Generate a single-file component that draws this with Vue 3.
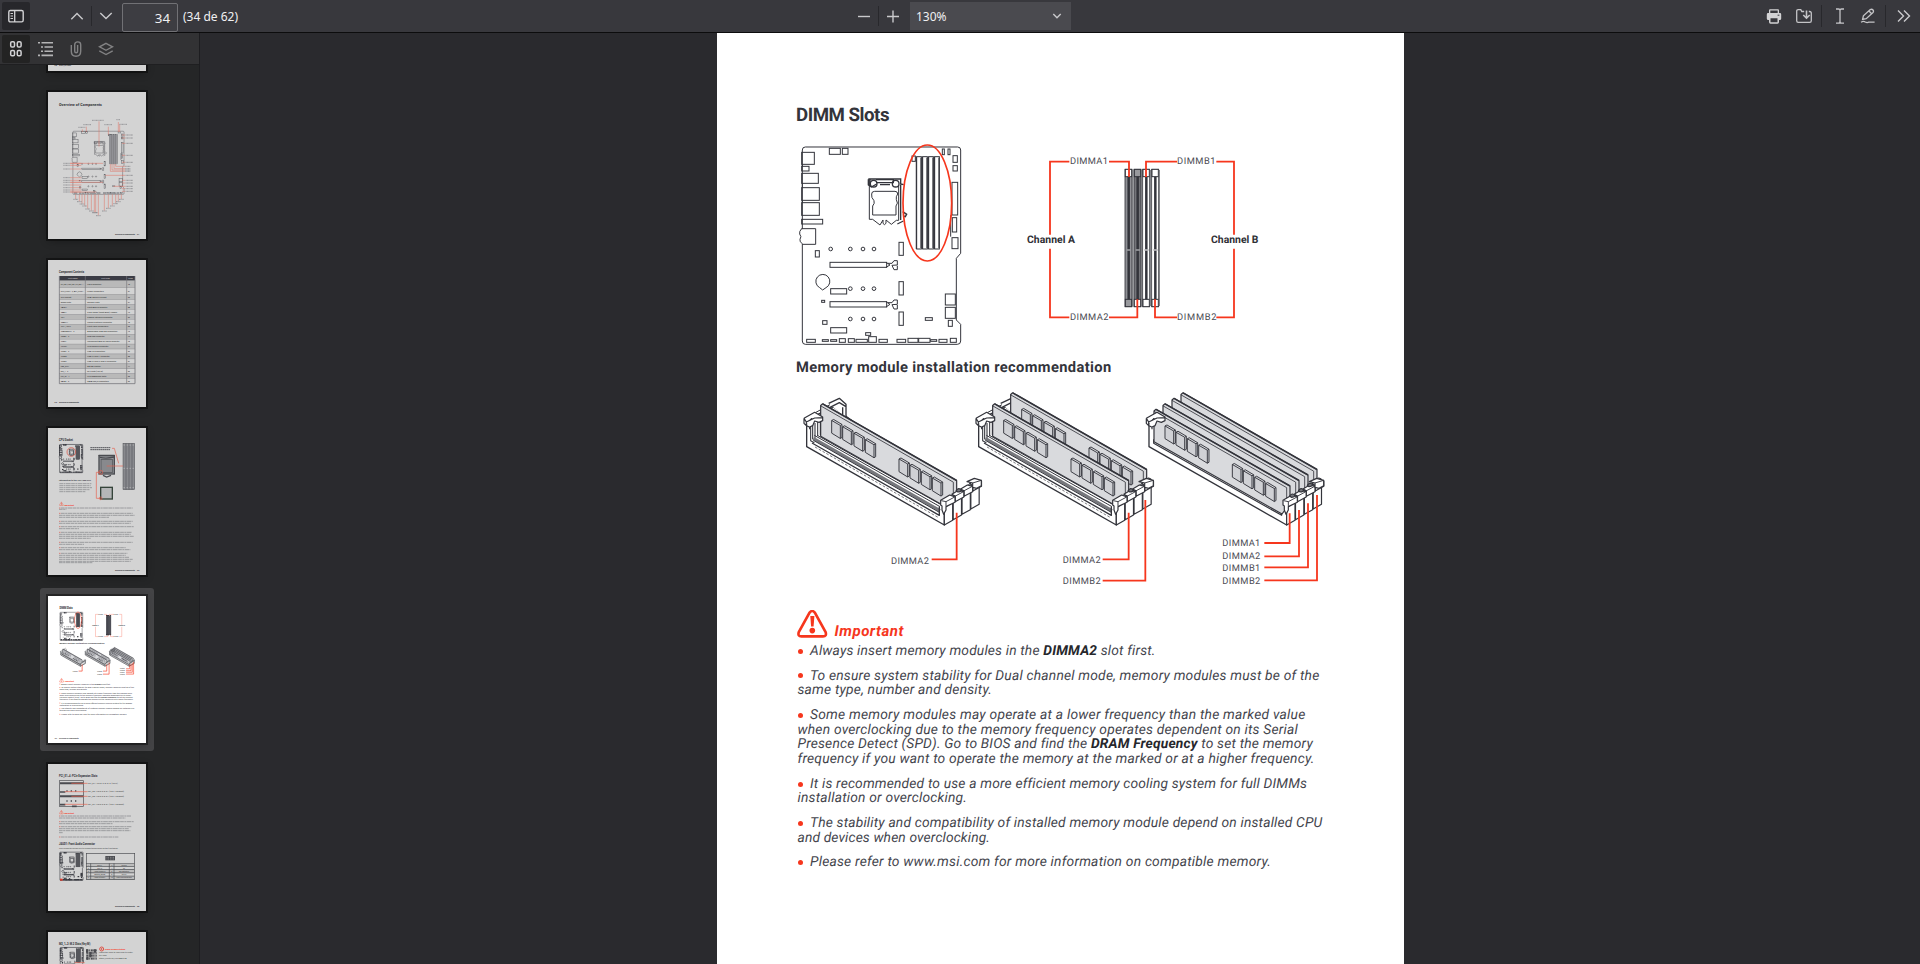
<script setup>
const notes = [
  [{ w: 345, parts: [['Always insert memory modules in the '], ['DIMMA2', 1], [' slot first.']] }],
  [
    { w: 509.5, parts: [['To ensure system stability for Dual channel mode, memory modules must be of the']] },
    { w: 194.5, parts: [['same type, number and density.']] },
  ],
  [
    { w: 495.5, parts: [['Some memory modules may operate at a lower frequency than the marked value']] },
    { w: 500.5, parts: [['when overclocking due to the memory frequency operates dependent on its Serial']] },
    { w: 515, parts: [['Presence Detect (SPD). Go to BIOS and find the '], ['DRAM Frequency', 1], [' to set the memory']] },
    { w: 517, parts: [['frequency if you want to operate the memory at the marked or at a higher frequency.']] },
  ],
  [
    { w: 496, parts: [['It is recommended to use a more efficient memory cooling system for full DIMMs']] },
    { w: 169.5, parts: [['installation or overclocking.']] },
  ],
  [
    { w: 512.5, parts: [['The stability and compatibility of installed memory module depend on installed CPU']] },
    { w: 192.5, parts: [['and devices when overclocking.']] },
  ],
  [{ w: 461, parts: [['Please refer to www.msi.com for more information on compatible memory.']] }],
]

let lineY = 655
const miniLines = []
notes.forEach((para) => {
  para.forEach((line, i) => {
    miniLines.push({ first: i === 0, x: i === 0 ? 810 : 797.5, y: lineY, w: line.w, parts: line.parts })
    lineY += 14.75
  })
  lineY += 9.95
})

const vFit = {
  mounted(el, { value }) {
    const natural = el.getBoundingClientRect().width
    el.style.letterSpacing = `${(value - natural) / el.textContent.length}px`
  },
}

const modules = [
  { dx: 0, slots: [1] },
  { dx: 516, slots: [3, 1] },
  { dx: 1027, slots: [3, 2, 1, 0] },
]
const chips = [61, 94, 128, 162, 263, 296, 330, 363]
const latches = [3, 2, 1, 0]

const leaders = [
  { d: 'M530 488V628H455', x: 333, y: 641, t: 'DIMMA2' },
  { d: 'M1046 488V628H968', x: 848, y: 639, t: 'DIMMA2' },
  { d: 'M1096 450V692H968', x: 848, y: 703, t: 'DIMMB2' },
  { d: 'M1529 490V579H1453', x: 1327, y: 589, t: 'DIMMA1' },
  { d: 'M1557 480V619H1453', x: 1327, y: 628, t: 'DIMMA2' },
  { d: 'M1584 460V652H1453', x: 1327, y: 664, t: 'DIMMB1' },
  { d: 'M1611 435V691H1453', x: 1327, y: 702, t: 'DIMMB2' },
]

// outline rectangles of the motherboard: x, y, width, height
const parts = [
  [148, 175, 33, 18], [187, 175, 17, 18], [65, 187, 38, 36], [65, 229, 22, 14], [65, 250, 50, 30],
  [65, 293, 53, 38], [65, 338, 53, 38], [65, 388, 63, 14], [106, 482, 12, 19], [357, 457, 13, 39],
  [357, 575, 13, 40], [357, 666, 13, 40], [150, 517, 170, 15], [150, 635, 170, 16], [152, 596, 48, 16],
  [152, 713, 48, 16], [496, 612, 30, 33], [496, 652, 30, 33], [505, 691, 12, 18], [436, 683, 21, 8],
  [125, 631, 9, 6], [128, 692, 13, 11], [487, 177, 6, 17], [504, 177, 6, 17], [519, 197, 13, 20],
  [519, 227, 13, 16], [516, 277, 17, 98], [517, 383, 13, 43], [516, 443, 18, 33],
  [80, 748, 26, 9], [127, 749, 18, 5], [152, 749, 18, 5], [178, 746, 18, 11], [205, 746, 18, 11],
  [228, 748, 34, 9], [266, 740, 23, 17], [257, 728, 15, 8], [297, 748, 25, 9], [351, 748, 26, 9],
  [384, 745, 30, 12], [416, 745, 34, 12], [452, 749, 18, 5], [477, 748, 24, 9], [511, 745, 18, 12],
  [396, 198, 10, 16],
]
const dimms = [410, 428, 446, 464]
const holes = [[152, 477], [211, 477], [249, 477], [282, 477], [211, 596], [249, 596], [282, 596], [211, 687], [249, 687], [282, 687]]

const channelSlots = [
  { x: 375, rail: '#8f9095', cap: '#fff', foot: '#98999d', mark: '#98999d' },
  { x: 402, rail: '#737479', cap: '#98999d', foot: '#fff', mark: '#98999d' },
  { x: 428, rail: '#fff', cap: '#fff', foot: '#fff', mark: '#b8b8bb' },
  { x: 455, rail: '#fff', cap: '#fff', foot: '#fff', mark: '#b8b8bb' },
]

const tableRows = [
  ['CPU_FAN1, PUMP_FAN1, SYS_FAN1~4', 'Fan Connectors', '40'], ['CPU_PWR1~2, ATX_PWR1', 'Power Connectors', '37'],
  ['CPU Socket', 'LGA1200 CPU Socket', '33'], ['DIMM Slots', 'Memory slots', '34'], ['JAUD1', 'Front Audio Connector', '38'],
  ['JBAT1', 'Clear CMOS (Reset BIOS) Jumper', '42'], ['JCI1', 'Chassis Intrusion Connector', '39'],
  ['JDASH1', 'Tuning Controller connector', '40'], ['JFP1, JFP2', 'Front Panel Connectors', '35'],
  ['JRAINBOW1~2', 'Addressable RGB LED connectors', '43'], ['JRGB1~2', 'RGB LED connector', '42'],
  ['JTBT1', 'Thunderbolt Add-on Card Connector', '40'], ['JTPM1', 'TPM Module Connector', '39'],
  ['JUSB1~2', 'USB 2.0 Connectors', '39'], ['JUSB3', 'USB 3.2 Gen 1 Connector', '38'],
  ['JUSB4', 'USB 3.2 Gen 2 Type-C Connector', '37'], ['LED_SW1', 'EZ LED Control', '44'],
  ['M2_1~2', 'M.2 slots (Key M)', '36'], ['PCI_E1~4', 'PCIe Expansion Slots', '35'], ['SATA1~6', 'SATA 6Gb/s Connectors', '36'],
].map((cells, i) => ({
  cells,
  y: i < 2 ? 62 + i * 21 : 104 + (i - 2) * 14.83,
  h: i < 2 ? 21 : 14.83,
  fill: i % 2 ? '#d3d3d3' : '#b9b9b9',
}))

const bottomPins = [[83, 321], [94, 328], [102, 335], [110, 341], [119, 350], [130, 356], [139, 361], [143, 361], [151, 370], [169, 356], [181, 348], [193, 341], [203, 334], [211, 328], [220, 321]]
const leftPins = [214, 220, 231, 257, 265, 271, 279, 287, 294, 300]
const rightPins = [129, 138, 154, 190, 211, 250, 265, 273, 283, 290, 298]

const cpuText = [
  [240, 221, 1], [244, 22], [256, 221, 1], [262, 227], [268, 150], [280, 221, 1], [286, 215], [296, 224, 1], [302, 60],
  [313, 219, 1], [319, 215], [325, 225], [331, 95], [343, 221, 1], [349, 75], [359, 200, 1], [365, 214],
  [376, 205, 1], [382, 200], [388, 210], [394, 221], [400, 215], [404, 100],
]
const pcieText = [[156, 216, 1], [162, 205], [173, 224, 1], [179, 168], [188, 217, 1], [194, 215], [200, 220], [206, 18], [219, 178, 1]]
const pcieRows = [[58, 70], [83, 50], [97, 70], [121, 50]]
const jaudRows = [['1', 'MIC L', '2', 'Ground'], ['3', 'MIC R', '4', 'NC'], ['5', 'Head Phone R', '6', 'MIC Detection'], ['7', 'SENSE_SEND', '8', 'No Pin'], ['9', 'Head Phone L', '10', 'Head Phone Detection']]
</script>

<template>
  <div class="viewer">
    <svg class="defs" width="0" height="0" aria-hidden="true">
      <defs>
        <g id="board" fill="none" stroke="#33343b">
          <path d="M76 171H533Q542 171 542 180V490L529 505V690L542 703V753Q542 763 532 763H76Q67 763 67 753V461Q58 456 60 448Q66 440 59 432Q57 424 65 416H67V180Q67 171 76 171Z" fill="none" />
          <rect v-for="(p, i) in parts" :key="i" :x="p[0]" :y="p[1]" :width="p[2]" :height="p[3]" />
          <path d="M65 416H107V463H67M512 376V440M67 223V229M67 280V293M67 331V338" />
          <g v-for="x in dimms" :key="x">
            <rect :x="x" y="200" width="14" height="277" />
            <path :d="`M${x - 1} 200V477M${x + 13} 203V474`" stroke-width="3.4" />
          </g>
          <circle v-for="(h, i) in holes" :key="i" :cx="h[0]" :cy="h[1]" r="5.5" />
          <path d="M119 593A21 21 0 1 1 138 593L128 600Z" />
          <path d="M318 517L330 525L318 532M324 520H336L342 512H352V525L336 526L342 539H352V527M318 635L330 643L318 651M324 638H336L342 630H352V643L336 644L342 657H352V645" />
          <path d="M268 268V388L278 388L300 405L309 390V400Q313 408 318 400V390L334 403L349 391H356V286" />
          <path d="M265 267H362V284M270 265V287M265 268V285L274 291L290 282M300 284H330M362 282L371 284" stroke-width="4" />
          <path d="M288 269H340V278H288M362 285V390" stroke-width="4" />
          <circle cx="281" cy="281" r="10" stroke-width="4" />
          <circle cx="347" cy="281" r="10" stroke-width="4" />
          <path d="M284 304H345Q353 304 353 312Q347 320 349 329Q356 340 348 348V375H278V348Q285 340 282 332Q273 323 275 312Q275 304 284 304Z" />
          <path d="M368 365L380 373L376 380L370 378M352 402L370 393" stroke-width="4" />
        </g>

        <g id="channels">
          <g v-for="s in channelSlots" :key="s.x" stroke="#33343b">
            <rect :x="s.x" y="88" width="21" height="412" :fill="s.rail" stroke-width="2.5" />
            <rect :x="s.x + 1" y="88" width="19" height="22" :fill="s.cap" stroke-width="3" />
            <rect :x="s.x + 1" y="478" width="19" height="22" :fill="s.foot" stroke-width="3" />
            <path :d="`M${s.x + 11} 110V478`" stroke-width="7.5" />
            <path :d="`M${s.x + 23} 90V498`" stroke="#77787d" stroke-width="3.4" />
            <path :d="`M${s.x + 5} 330H${s.x + 18}`" :stroke="s.mark" stroke-width="5" />
          </g>
          <g fill="none" stroke="#f6361d" stroke-width="5.4">
            <path d="M208 65H150V284M150 326V532H208M327 65H387V111M327 532H412V478M531 65H438V111M649 65H702V284M702 326V532H649M531 532H465V478" />
          </g>
        </g>

        <g id="modules" stroke="#33343b" stroke-linejoin="round">
          <g v-for="m in modules" :key="m.dx" :transform="`translate(${m.dx} 0)`">
            <path d="M80 222V290L493 525V468L520 440L160 170L100 200Z" fill="#fff" stroke-width="4" />
            <g v-if="m.slots.length < 4" fill="none">
              <path d="M146 160L178 145L198 163V204M150 172L178 158L198 170M188 172V200" fill="#fff" stroke-width="4" />
              <path d="M106 188L150 164M118 196L160 172" stroke-width="3" />
              <path d="M92 230V272L103 278M98 226V268M105 219V264M113 216V258M121 214V255" stroke-width="3.2" />
              <path d="M100 265L480 482" stroke="#77787d" stroke-width="9" />
              <path d="M103 256L480 470M100 271L478 487M112 256L480 462" stroke-width="3" />
              <path d="M96 279L478 496V470" stroke-width="4" />
              <path d="M105 291L476 503" stroke-width="2" stroke-dasharray="8 5" />
            </g>
            <path v-else d="M94 268V280L478 496V470" fill="none" stroke-width="3.4" />
            <g v-for="s in m.slots" :key="s" :transform="`translate(${27 * s} ${-16.5 * s})`">
              <path d="M95 275V183L101 178L503 408V460L479 492Z" fill="#d9dadd" stroke-width="3.6" />
              <path d="M95 184L493 413V455" fill="none" stroke-width="2.5" />
              <path d="M101 178L503 408" fill="none" stroke-width="4.6" />
              <g v-if="m.slots.length < 4 || s === 0" fill="#d0d1d5" stroke-width="2.8">
                <path v-for="c in chips" :key="c" :transform="`translate(${c + 67} ${c * .572 + 191})`" d="M0 2L6 -1L31 14V53L26 56L0 40ZM0 2L26 17L31 14M26 17V56" />
              </g>
            </g>
            <path d="M72 205L104 187L128 201V212L117 217L104 213L98 227L89 231V238M72 205L79 216L104 204L128 203M72 205V220L79 227L88 231M79 216V226" fill="#fff" stroke-width="3.6" />
            <g v-for="l in latches" :key="l" :transform="`translate(${26.5 * l} ${-16 * l})`" fill="#fff" stroke-width="3.6">
              <path d="M493 474V525L518 511V455Z" />
              <path v-if="l" d="M489 449L509 437L525 441V457L499 471V454Z" />
              <path v-else d="M482 451L509 435L525 441V457L498 470V480L491 493L486 480V468L482 465Z" />
              <path d="M484 452L498 455L524 441M498 455V468" fill="none" stroke-width="2.8" />
              <path v-if="m.slots.includes(l)" d="M502 438Q509 427 518 436Q516 442 507 442Z" fill="#77787d" />
            </g>
            <path d="M561 395L583 385L604 391V407L590 415L578 412V399Z" fill="#fff" stroke-width="3.6" />
            <path d="M578 399L604 391" fill="none" stroke-width="2.8" />
          </g>
          <path v-for="(l, i) in leaders" :key="i" :d="l.d" fill="none" stroke="#f6361d" stroke-width="5.4" stroke-linejoin="miter" />
        </g>

        <g id="warning">
          <path d="M12.6 2.6Q15.2 -.6 17.8 2.6L28.6 22Q30 26.4 26 26.4H4.4Q.4 26.4 1.8 22Z" fill="none" stroke="#f6361d" stroke-width="2.6" />
          <path d="M13.3 6H17.4L16.6 16.4H14.1Z" fill="#f6361d" />
          <circle cx="15.3" cy="20.6" r="2.8" fill="#f6361d" />
        </g>
      </defs>
    </svg>

    <header class="toolbar">
      <div class="group">
        <button class="btn on" aria-label="Sidebar">
          <svg width="16" height="16" fill="none" stroke="#d2d2d4"><rect x=".8" y="2.5" width="14.4" height="11.4" rx="1.6" stroke-width="1.4" /><path d="M6.7 2.5V14" stroke-width="1.3" /><path d="M2.5 5.5H5M2.5 8H5M2.5 10.5H5" /></svg>
        </button>
        <span class="gap-wide"></span>
        <button class="btn" aria-label="Previous"><svg width="16" height="16"><path d="M2.3 11.2L8 5.5L13.7 11.2" class="line" /></svg></button>
        <i class="sep"></i>
        <button class="btn" aria-label="Next"><svg width="16" height="16"><path d="M2.3 4.9L8 10.6L13.7 4.9" class="line" /></svg></button>
        <div class="page-input">34</div>
        <span class="count">(34 de 62)</span>
      </div>
      <div class="group middle">
        <button class="btn" aria-label="Zoom out"><svg width="16" height="16"><path d="M2 8.5H14" class="line" /></svg></button>
        <i class="sep"></i>
        <button class="btn" aria-label="Zoom in"><svg width="16" height="16"><path d="M2 8.5H14M8 2.5V14.5" class="line" /></svg></button>
        <div class="select"><span>130%</span><svg width="16" height="16"><path d="M4.3 6L8 9.7L11.7 6" class="line" /></svg></div>
      </div>
      <div class="group right">
        <button class="btn" aria-label="Print">
          <svg width="16" height="16" fill="#d2d2d4"><path d="M4 1.2H12Q13 1.2 13 2.5V5H14Q15.2 5 15.2 6.4V10.5Q15.2 12 13.8 12H13V14Q13 15.8 11.5 15.8H4.5Q3 15.8 3 14V12H2.2Q.8 12 .8 10.5V6.4Q.8 5 2 5H3V2.5Q3 1.2 4 1.2Z" /><path d="M4.3 2.6H11.7V5H4.3ZM4.5 10.3H11.5V14.3H4.5Z" fill="#38383d" /><path d="M11.6 7.2H13.4" stroke="#38383d" /></svg>
        </button>
        <button class="btn dl" aria-label="Save">
          <svg width="16" height="16" fill="none" stroke="#c4c4c7" stroke-width="1.3"><path d="M8.2 3.5H5.8L4.8 1.7H2.2Q.7 1.7 .7 3.2V12.7Q.7 14.3 2.2 14.3H13.7Q15.3 14.3 15.3 12.7V5Q15.3 3.5 13.7 3.5H12.8" /><path d="M10.5 2.5V10M7.3 7L10.5 10.2L13.7 7" stroke-width="1.6" /></svg>
        </button>
        <i class="sep"></i>
        <button class="btn" aria-label="Text">
          <svg width="16" height="16" fill="none" stroke="#c4c4c7" stroke-width="1.3"><path d="M4 1H6.5Q8 1 8 2.6V13.6Q8 15.2 6.5 15.2H4M12 1H9.5Q8 1 8 2.6M8 13.6Q8 15.2 9.5 15.2H12" /></svg>
        </button>
        <button class="btn" aria-label="Draw">
          <svg width="16" height="16" fill="none" stroke="#c4c4c7" stroke-width="1.3"><path d="M2.6 11.5L3.4 7.8L10.3 1.6Q11.8 .7 13 2Q14 3.3 13 4.5L6.2 10.7ZM9 3L11.6 5.8" /><path d="M1 14.2Q3.5 12.8 5.3 14Q7 15 8.7 14.2H14.6" /></svg>
        </button>
        <i class="sep last"></i>
        <button class="btn" aria-label="Tools"><svg width="16" height="16"><path d="M2 2.5L7.5 8L2 13.5M8 2.5L13.5 8L8 13.5" class="line" /></svg></button>
      </div>
    </header>

    <div class="body">
      <aside class="sidebar">
        <nav class="tabs">
          <button class="btn on" aria-label="Thumbnails">
            <svg width="16" height="16" fill="none" stroke="#d2d2d4" stroke-width="1.5"><rect x="2.7" y=".8" width="3.8" height="5.2" rx="1.3" /><rect x="9.3" y=".8" width="3.8" height="5.2" rx="1.3" /><rect x="2.7" y="9.6" width="3.8" height="5.2" rx="1.3" /><rect x="9.3" y="9.6" width="3.8" height="5.2" rx="1.3" /></svg>
          </button>
          <button class="btn" aria-label="Outline">
            <svg width="16" height="16" stroke="#b4b4b5" stroke-width="1.6"><path d="M0 1.8H2M3.5 1.8H15M3 6H5M6.5 6H15M3 10.2H5M6.5 10.2H15M0 14.4H2M3.5 14.4H15" /></svg>
          </button>
          <button class="btn" aria-label="Attachments">
            <svg width="16" height="16" fill="none" stroke="#828283" stroke-width="1.4"><path d="M3.3 4V10.3Q3.3 15.2 8 15.2Q12.7 15.2 12.7 10.3V3.8Q12.7 .9 9.7 .9Q6.7 .9 6.7 3.8V10.2Q6.7 11.7 8.2 11.7Q9.6 11.7 9.6 10.2V4" /></svg>
          </button>
          <button class="btn" aria-label="Layers">
            <svg width="16" height="16" fill="none" stroke="#828283" stroke-width="1.4"><path d="M8 2.3L14.5 5.8L8 9.3L1.5 5.8ZM1.3 9.8L8 13.5L14.7 9.8" /></svg>
          </button>
        </nav>

        <div class="thumbs">
          <div class="thumb">
            <svg viewBox="0 0 294 441"><text x="19" y="427" class="tb" font-size="7">30</text><text x="33" y="427" class="tb" font-size="6" textLength="36">Rear I/O Panel</text></svg>
          </div>

          <div class="thumb">
            <svg viewBox="0 0 294 441">
              <text x="33" y="42" class="tb" font-size="11" textLength="129">Overview of Components</text>
              <use href="#board" transform="translate(53 63) scale(.323 .32)" stroke-width="4" opacity=".8" />
              <rect x="184" y="128" width="23" height="88" fill="#96969a" />
              <path d="M190 128V216M196 128V216M202 128V216" stroke="#55555a" />
              <g fill="none" stroke="#de7568" stroke-width="1.6">
                <path d="M153 88V164M103 112V120M115 104V120M181 104V128M211 90V120M215 98V120" />
                <path v-for="(p, i) in bottomPins" :key="i" :d="`M${p[0]} 307V${p[1]}`" />
                <path v-for="y in leftPins" :key="y" :d="`M66 ${y}H100`" />
                <path d="M67 214H165M67 271H165M67 300H145" />
                <path v-for="y in rightPins" :key="y" :d="`M222 ${y}H232`" />
                <path d="M187 216V238H232M192 216V234H232M198 216V230H232M203 216V223H232M172 250H225M196 283H225" />
              </g>
              <g stroke="#77777b" stroke-width="2" stroke-dasharray="3 1">
                <path d="M132 85H168M205 83H217M106 98H129M169 98H192M214 97H237M91 106H112" />
                <path v-for="y in leftPins" :key="y" :d="`M46 ${y}H65`" />
                <path v-for="y in rightPins" :key="y" :d="`M233 ${y}H255`" />
                <path v-for="(p, i) in bottomPins" :key="i" :d="`M${p[0] - 7} ${p[1] + 1}H${p[0] + 7}`" />
                <path d="M232 223H248M232 230H248M232 234H248M232 238H248" />
              </g>
              <text x="201" y="429" class="tb" font-size="6" textLength="60">Overview of Components</text><text x="266" y="429" class="tb" font-size="7">31</text>
            </svg>
          </div>

          <div class="thumb">
            <svg viewBox="0 0 294 441">
              <text x="33" y="40" class="tb" font-size="8" textLength="75">Component Contents</text>
              <rect x="34" y="48" width="227" height="14" fill="#3b3c45" />
              <text x="60" y="57" font-size="6" fill="#ddd">Port Name</text><text x="160" y="57" font-size="6" fill="#ddd">Port Type</text><text x="241" y="57" font-size="6" fill="#ddd">Page</text>
              <g v-for="(r, i) in tableRows" :key="i">
                <rect x="34" :y="r.y" width="227" :height="r.h" :fill="r.fill" stroke="#8a8a8e" stroke-width="1" />
                <text x="38" :y="r.y + r.h / 2 + 2" font-size="6" fill="#222" :textLength="i < 2 ? 68 : null" lengthAdjust="spacingAndGlyphs">{{ r.cells[0] }}</text>
                <text x="118" :y="r.y + r.h / 2 + 2" font-size="6" fill="#222">{{ r.cells[1] }}</text>
                <text x="239" :y="r.y + r.h / 2 + 2" font-size="6" fill="#222">{{ r.cells[2] }}</text>
              </g>
              <path d="M34 48V371H261V48M112 48V371M236 48V371" fill="none" stroke="#77777c" stroke-width="2" />
              <text x="19" y="430" class="tb" font-size="7">32</text><text x="33" y="430" class="tb" font-size="6" textLength="60">Overview of Components</text>
            </svg>
          </div>

          <div class="thumb">
            <svg viewBox="0 0 294 441">
              <text x="33" y="39" class="tb" font-size="8" textLength="42">CPU Socket</text>
              <use href="#board" transform="translate(25 25) scale(.146 .143)" stroke-width="12" />
              <rect x="83" y="54" width="12" height="40" fill="#55565b" />
              <circle cx="70" cy="72" r="13" fill="none" stroke="#d8483a" stroke-width="2" />
              <rect x="225" y="46" width="35" height="139" fill="#88898d" stroke="#4a4b50" stroke-width="1.5" />
              <path d="M234 46V185M243 46V185M252 46V185" stroke="#4a4b50" stroke-width="1.5" />
              <path d="M227 51H259M227 121H259M227 179H259" stroke="#ddd" stroke-width="2" stroke-dasharray="3 6" />
              <g stroke="#4a4b50"><rect x="153" y="83" width="46" height="55" fill="#9a9b9f" stroke-width="4" /><rect x="159" y="94" width="34" height="40" fill="#88898d" stroke-width="2" /><path d="M152 82H200M165 142L176 147L189 142M155 88Q175 93 198 87" fill="none" stroke-width="4" /></g>
              <rect x="158" y="178" width="35" height="35" fill="#b5b6b7" stroke="#35443a" stroke-width="4" />
              <path d="M176 114H225M192 61H199L212 106M145 211V133H158M145 211H158" fill="none" stroke="#e5604f" stroke-width="2" />
              <circle cx="158" cy="133" r="6" fill="none" stroke="#e5604f" stroke-width="2" /><circle cx="158" cy="211" r="4" fill="none" stroke="#e5604f" stroke-width="2" />
              <path d="M127 59H188M127 65H186" stroke="#55565b" stroke-width="3" stroke-dasharray="5 1" />
              <text x="33" y="159" class="tb" font-size="6.3" textLength="96">Introduction to the LGA1200 CPU</text>
              <path d="M34 167H130M34 173H128M34 179H132M34 185H126M34 191H112" class="dash" />
              <use href="#warning" transform="translate(34 222) scale(.4)" /><text x="48" y="233" font-size="7" class="imp">Important</text>
              <path v-for="(r, i) in cpuText" :key="i" :d="`M${r[2] ? 39 : 33} ${r[0]}h${r[2] ? r[1] - 6 : r[1]}`" class="dash" />
              <path v-for="(r, i) in cpuText.filter((x) => x[2])" :key="'r' + i" :d="`M34 ${r[0]}h3`" stroke="#dd5548" stroke-width="3" />
              <text x="201" y="429" class="tb" font-size="6" textLength="60">Overview of Components</text><text x="266" y="429" class="tb" font-size="7">33</text>
            </svg>
          </div>

          <div class="thumb current">
            <svg viewBox="717 33 687 1030">
              <text x="797" y="121" class="tb" font-size="18.7" textLength="92">DIMM Slots</text>
              <g transform="translate(780 90) scale(.3333)"><use href="#board" stroke-width="9" /><rect x="410" y="200" width="68" height="277" fill="#4a4b52" /><ellipse cx="442" cy="339" rx="73" ry="174" fill="none" stroke="#f6361d" stroke-width="11" /></g>
              <g transform="translate(1000 140) scale(.3333)"><use href="#channels" /><path d="M378 90H476V498H378Z" fill="#3a3b44" opacity=".8" /></g>
              <g class="tb" font-size="10"><text x="1027" y="242">Channel A</text><text x="1211" y="242">Channel B</text></g>
              <g font-size="9" fill="#444"><text x="1070" y="164">DIMMA1</text><text x="1177" y="164">DIMMB1</text><text x="1070" y="320">DIMMA2</text><text x="1177" y="320">DIMMB2</text></g>
              <text x="797" y="372" class="tb" font-size="14.7" textLength="315">Memory module installation recommendation</text>
              <g transform="translate(780 350) scale(.3333)">
                <use href="#modules" />
                <g v-for="m in modules" :key="m.dx" :transform="`translate(${m.dx} 0)`" fill="none" stroke="#2f3036" opacity=".75">
                  <path d="M80 215V290L493 525L598 467V400L493 470V525" stroke-width="14" />
                  <path v-for="s in m.slots" :key="s" :transform="`translate(${27 * s} ${-16.5 * s})`" d="M95 275V183L503 413" stroke-width="12" />
                  <path d="M90 265L480 485" stroke-width="16" />
                  <path d="M135 245L240 305M335 360L440 420" stroke-width="22" stroke-dasharray="22 14" />
                </g>
                <path v-for="(l, i) in leaders" :key="i" :d="l.d" fill="none" stroke="#f6361d" stroke-width="9" />
                <text v-for="(l, i) in leaders" :key="'t' + i" :x="l.x" :y="l.y" font-size="27" fill="#444">{{ l.t }}</text>
              </g>
              <use href="#warning" transform="translate(797 610)" /><text x="835" y="636" font-size="15" class="imp">Important</text>
              <g v-for="(l, i) in miniLines" :key="i">
                <circle v-if="l.first" cx="800.5" :cy="l.y - 5" r="3.4" fill="#f6361d" />
                <text :x="l.x" :y="l.y" font-size="14" font-style="italic" fill="#33343b" :textLength="l.w"><tspan v-for="(p, j) in l.parts" :key="j" :font-weight="p[1] ? 700 : 400">{{ p[0] }}</tspan></text>
              </g>
              <text x="762" y="1035" class="tb" font-size="16">34</text><text x="795" y="1035" class="tb" font-size="13" textLength="138">Overview of Components</text>
            </svg>
          </div>

          <div class="thumb">
            <svg viewBox="0 0 294 441">
              <text x="33" y="39" class="tb" font-size="8" textLength="115">PCI_E1~4: PCIe Expansion Slots</text>
              <g fill="none" stroke="#4a4b50" stroke-width="2"><rect x="34" y="50" width="72" height="77" /><path d="M36 58H106M36 97H106" stroke-width="6" /><path d="M36 122H52M36 84H52" stroke-width="5" /><path d="M55 81H86M55 111H86" stroke-width="4" stroke-dasharray="4 9" /><path d="M72 127H86" stroke-width="5" /></g>
              <g v-for="r in pcieRows" :key="r[0]"><path :d="`M${r[1]} ${r[0]}H118`" stroke="#e5604f" stroke-width="2" /></g>
              <g font-size="6" fill="#222"><text x="119" y="60" textLength="90">PCI_E1: PCIe 3.0 x16 (CPU)</text><text x="119" y="85" textLength="109">PCI_E2: PCIe 3.0 x1 (PCH chipset)</text><text x="119" y="99" textLength="109">PCI_E3: PCIe 3.0 x4 (PCH chipset)</text><text x="119" y="123" textLength="109">PCI_E4: PCIe 3.0 x1 (PCH chipset)</text></g>
              <use href="#warning" transform="translate(34 139) scale(.4)" /><text x="48" y="149" font-size="7" class="imp">Important</text>
              <path v-for="(r, i) in pcieText" :key="i" :d="`M${r[2] ? 39 : 33} ${r[0]}h${r[1] - 6}`" class="dash" />
              <path v-for="(r, i) in pcieText.filter((x) => x[2])" :key="'r' + i" :d="`M34 ${r[0]}h3`" stroke="#dd5548" stroke-width="3" />
              <text x="33" y="243" class="tb" font-size="8" textLength="108">JAUD1: Front Audio Connector</text>
              <text x="33" y="254" font-size="6" fill="#444" textLength="178">This connector allows you to connect audio jacks on the front panel.</text>
              <use href="#board" transform="translate(26 240) scale(.146 .143)" stroke-width="12" />
              <rect x="83" y="269" width="13" height="40" fill="#55565b" /><rect x="36" y="344" width="8" height="6" fill="#dd3d2f" />
              <rect x="115" y="268" width="145" height="78" fill="none" stroke="#4a4b50" stroke-width="2" />
              <rect x="172" y="276" width="29" height="13" fill="#4a4b50" /><path d="M176 280H198M176 285H198" stroke="#ccc" stroke-width="2" stroke-dasharray="2 3" />
              <g v-for="(r, i) in jaudRows" :key="i">
                <rect x="115" :y="298 + i * 9.6" width="145" height="9.6" :fill="i % 2 ? '#d3d3d3' : '#bdbdbd'" stroke="#4a4b50" stroke-width="1.6" />
                <g font-size="5.5" fill="#333" text-anchor="middle"><text x="121" :y="305 + i * 9.6">{{ r[0] }}</text><text x="155" :y="305 + i * 9.6">{{ r[1] }}</text><text x="191" :y="305 + i * 9.6">{{ r[2] }}</text><text x="228" :y="305 + i * 9.6" font-size="4.8">{{ r[3] }}</text></g>
              </g>
              <path d="M128 298V346M184 298V346M198 298V346" stroke="#4a4b50" stroke-width="2" />
              <text x="201" y="429" class="tb" font-size="6" textLength="60">Overview of Components</text><text x="266" y="429" class="tb" font-size="7">35</text>
            </svg>
          </div>

          <div class="thumb">
            <svg viewBox="0 0 294 441">
              <text x="33" y="39" class="tb" font-size="8" textLength="94">M2_1~2: M.2 Slots (Key M)</text>
              <use href="#board" transform="translate(27 22) scale(.146 .143)" stroke-width="12" />
              <rect x="84" y="51" width="13" height="40" fill="#55565b" />
              <path d="M80 92H110" stroke="#e5604f" stroke-width="2" />
              <g stroke="#4a4b50"><rect x="115" y="52" width="31" height="31" fill="#aaa" stroke="none" /><path d="M115 55H146M115 63H146M115 71H146M115 80H146" stroke-width="5" stroke-dasharray="5 2 3 4" /><path d="M117 52V62M127 60V76M141 52V62M118 74V83" stroke-width="6" /></g>
              <circle cx="161" cy="51" r="6" fill="none" stroke="#dd3d2f" stroke-width="2.5" /><path d="M159 48L164 51L159 54Z" fill="#dd3d2f" />
              <text x="170" y="54" font-size="7" class="imp" textLength="62">Video Demonstration</text>
              <g font-size="6" fill="#444"><text x="153" y="64" textLength="101">Watch the video to learn how to Install</text><text x="153" y="71">M.2 SSD.</text><text x="153" y="81" textLength="83">https://youtu.be/JCTFABytrYA</text></g>
            </svg>
          </div>
        </div>
      </aside>

      <main class="canvas">
        <article class="page">
          <h1><span v-fit="93">DIMM Slots</span></h1>
          <svg class="fig" width="540" height="206" viewBox="780 140 540 206">
            <g transform="translate(780 90) scale(.33333)">
              <use href="#board" stroke-width="3" />
              <ellipse cx="442" cy="339" rx="73" ry="174" fill="none" stroke="#f6361d" stroke-width="5" />
            </g>
            <use href="#channels" transform="translate(1000 140) scale(.33333)" />
            <g class="lbl">
              <text x="1070" y="164.3" textLength="38">DIMMA1</text><text x="1177" y="164.3" textLength="38.5">DIMMB1</text>
              <text x="1070" y="320.3" textLength="38.5">DIMMA2</text><text x="1177" y="320.3" textLength="39.5">DIMMB2</text>
            </g>
            <g class="lbl ch"><text x="1027" y="242.7" textLength="48">Channel A</text><text x="1211" y="242.7" textLength="47.5">Channel B</text></g>
          </svg>
          <h2><span v-fit="315.5">Memory module installation recommendation</span></h2>
          <svg class="fig" width="600" height="213" viewBox="780 377 600 213">
            <use href="#modules" transform="translate(780 350) scale(.33333)" />
            <g class="lbl"><text v-for="(l, i) in leaders" :key="i" :x="780 + l.x / 3" :y="350 + l.y / 3" textLength="38">{{ l.t }}</text></g>
          </svg>
          <div class="important">
            <svg width="31" height="29"><use href="#warning" /></svg>
            <h3><span v-fit="69.5">Important</span></h3>
          </div>
          <ul class="notes">
            <li v-for="(para, i) in notes" :key="i">
              <div v-for="(line, j) in para" :key="j" class="row">
                <i v-if="j === 0" class="dot"></i>
                <span v-fit="line.w" class="txt"><template v-for="(p, k) in line.parts" :key="k"><b v-if="p[1]">{{ p[0] }}</b><template v-else>{{ p[0] }}</template></template></span>
              </div>
            </li>
          </ul>
        </article>
      </main>
    </div>
  </div>
</template>

<style>
html, body { margin: 0; overflow: hidden; background: #2a2a2e; }
</style>

<style scoped>
* { box-sizing: border-box; }
.viewer { display: flex; flex-direction: column; width: 1920px; height: 964px; overflow: hidden; font: 12px "Noto Sans", sans-serif; color: #f0f0f2; }
.defs { position: absolute; }
.toolbar { display: grid; grid-template-columns: 850px 1fr auto; align-items: center; height: 33px; background: #38383d; border-bottom: 1px solid #0c0c0d; }
.group { display: flex; align-items: center; height: 32px; }
.group:first-child { padding-left: 2px; }
.right { padding-right: 2px; }
.btn { display: flex; align-items: center; justify-content: center; flex: none; width: 28px; height: 28px; padding: 0; border: 0; border-radius: 2px; background: none; }
.btn.on { background: #27272b; }
.tabs .btn.on { background: #232323; }
.line { fill: none; stroke: #c9c9cc; stroke-width: 1.4; }
.gap-wide { width: 33px; }
.sep { flex: none; width: 1px; height: 20px; background: #28282c; }
.right .sep { height: 22px; margin: 0 4px 0 3px; }
.right .last { margin-right: 4px; }
.right .dl { margin: 0 0 0 2px; }
.page-input { width: 56px; height: 29px; margin: 3px 5px 0 2px; padding: 0 7px; border: 1px solid #717175; border-radius: 2px; background: #3d3d42; font-size: 13.3px; line-height: 29px; text-align: right; }
.count { padding-top: 1px; line-height: 32px; white-space: nowrap; }
.select { display: flex; align-items: center; justify-content: space-between; width: 161px; height: 28px; margin-left: 3px; padding: 0 6px 0 6px; background: #4a4a4f; }
.body { display: flex; flex: 1; min-height: 0; }
.sidebar { display: flex; flex-direction: column; width: 200px; flex: none; background: #252627; border-right: 1px solid #1d1d20; }
.tabs { display: flex; gap: 2px; align-items: center; flex: none; height: 32px; padding-left: 2px; background: #323234; border-bottom: 1px solid #1f1f21; }
.thumbs { display: flex; flex-direction: column; justify-content: flex-start; flex: 1; min-height: 0; margin-top: 0; overflow: hidden; }
.thumb { display: flex; flex: none; justify-content: center; width: 114px; height: 163px; margin: 0 0 5px 40px; padding: 8px; border-radius: 3px; }
.thumb:first-child { margin-top: -149px; }
.thumb svg { display: block; width: 98px; height: 147px; background: #d3d3d3; box-shadow: 0 0 0 2px rgba(0, 0, 0, .42), 0 2px 8px rgba(0, 0, 0, .3); font-family: Roboto, sans-serif; }
.current { background: #444446; }
.current svg { background: #fff; }
.tb { font-weight: 700; fill: #2f3036; }
.imp { font-weight: 700; font-style: italic; fill: #f6361d; }
.dash { fill: none; stroke: #8d8e92; stroke-width: 2.4; stroke-dasharray: 11 1.5 6 1.5 14 1.5; }
.canvas { display: flex; flex: 1; padding-left: 517px; background: #2a2a2e; }
.page { width: 687px; height: 1030px; padding: 69.5px 0 0 63px; background: #fff; color: #33343b; font-family: Roboto, "Noto Sans", sans-serif; text-rendering: geometricPrecision; }
h1, h2, h3 { margin: 0; font-weight: 700; white-space: nowrap; }
h1 span, h2 span, h3 span { display: inline-block; }
h1 { height: 24px; padding-left: 16px; font-size: 18.7px; line-height: 24px; }
h2 { height: 20px; margin-top: 11px; padding-left: 16px; font-size: 14.7px; line-height: 20px; }
.fig { display: block; }
h1 + .fig { margin-top: 13.5px; }
.lbl { font-size: 9.3px; fill: #4b4c54; }
.ch { font-size: 10.4px; font-weight: 700; fill: #2f3036; }
.important { display: flex; height: 30px; margin-top: 20px; padding-left: 17px; }
.important h3 { margin: 12px 0 0 6.5px; color: #f6361d; font-size: 15px; font-style: italic; line-height: 18px; }
.notes { margin: 4px 0 0; padding: 0 0 0 17.5px; list-style: none; color: #44454d; font-size: 13.8px; font-style: italic; line-height: 14.75px; }
.notes li { margin-bottom: 9.8px; }
.row { display: flex; align-items: center; height: 14.75px; white-space: pre; }
.txt { display: inline-block; }
.dot { width: 5px; height: 5px; margin: 0 7px 0 .5px; border-radius: 50%; background: #f6361d; }
.notes b { color: #26272c; }
</style>
